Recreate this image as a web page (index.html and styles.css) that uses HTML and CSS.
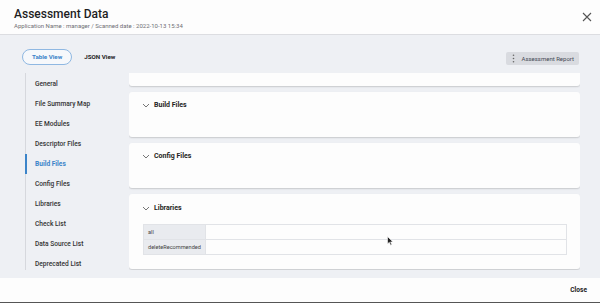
FILE: index.html
```html
<!DOCTYPE html>
<html lang="en">
<head>
  <meta charset="UTF-8">
  <meta name="viewport" content="width=device-width, initial-scale=1">
  <title>Assessment Data</title>
  <link rel="stylesheet" href="styles.css">
</head>
<body>
  <div class="modal">
    <header class="modal-header">
      <div>
        <h1>Assessment Data</h1>
        <p class="subtitle">Application Name : manager / Scanned date : 2022-10-13 15:34</p>
      </div>
      <button class="close-x" aria-label="Close">
        <svg width="10" height="10" viewBox="0 0 10 10"><path d="M1 1 L9 9 M9 1 L1 9" stroke="#555" stroke-width="1.1" fill="none"/></svg>
      </button>
    </header>

    <div class="modal-body">
      <div class="toolbar">
        <div class="tabs">
          <span class="tab active">Table View</span>
          <span class="tab">JSON View</span>
        </div>
        <button class="report-btn">
          <svg width="3" height="9" viewBox="0 0 3 9"><circle cx="1.5" cy="1.2" r="0.8" fill="#666"/><circle cx="1.5" cy="4.5" r="0.8" fill="#666"/><circle cx="1.5" cy="7.8" r="0.8" fill="#666"/></svg>
          Assessment Report
        </button>
      </div>

      <div class="main">
        <nav class="sidebar">
          <a class="nav-item">General</a>
          <a class="nav-item">File Summary Map</a>
          <a class="nav-item">EE Modules</a>
          <a class="nav-item">Descriptor Files</a>
          <a class="nav-item active">Build Files</a>
          <a class="nav-item">Config Files</a>
          <a class="nav-item">Libraries</a>
          <a class="nav-item">Check List</a>
          <a class="nav-item">Data Source List</a>
          <a class="nav-item">Deprecated List</a>
        </nav>

        <div class="content">
          <div class="card card-tail"></div>

          <div class="card">
            <div class="card-head">
              <svg class="chev" width="8" height="5" viewBox="0 0 8 5"><path d="M1 1 L4 4 L7 1" stroke="#666" stroke-width="0.9" fill="none"/></svg>
              <span>Build Files</span>
            </div>
          </div>

          <div class="card">
            <div class="card-head">
              <svg class="chev" width="8" height="5" viewBox="0 0 8 5"><path d="M1 1 L4 4 L7 1" stroke="#666" stroke-width="0.9" fill="none"/></svg>
              <span>Config Files</span>
            </div>
          </div>

          <div class="card card-lib">
            <div class="card-head">
              <svg class="chev" width="8" height="5" viewBox="0 0 8 5"><path d="M1 1 L4 4 L7 1" stroke="#666" stroke-width="0.9" fill="none"/></svg>
              <span>Libraries</span>
            </div>
            <table class="lib-table">
              <tr><th>all</th><td></td></tr>
              <tr><th>deleteRecommended</th><td></td></tr>
            </table>
            <svg class="cursor" width="7" height="10" viewBox="0 0 7 10"><path d="M0.5 0.5 L0.5 8 L2.3 6.3 L3.6 9.3 L4.8 8.8 L3.6 5.9 L6 5.9 Z" fill="#222" stroke="#fff" stroke-width="0.6"/></svg>
          </div>
        </div>
      </div>
    </div>

    <footer class="modal-footer">
      <button class="close-btn">Close</button>
    </footer>
  </div>
</body>
</html>
```

FILE: styles.css
```css
* {
  margin: 0;
  padding: 0;
  box-sizing: border-box;
}

body {
  font-family: Roboto, "Liberation Sans", sans-serif;
  background: #fff;
  width: 600px;
  height: 303px;
  overflow: hidden;
  color: #222;
}

button {
  font-family: inherit;
  border: none;
  background: none;
}

.modal {
  display: flex;
  flex-direction: column;
  height: 303px;
}

.modal-header {
  height: 35px;
  padding: 6px 8px 0 14px;
  display: flex;
  justify-content: space-between;
  align-items: flex-start;
  background: #fdfdfd;
  border-bottom: 1px solid #dcdde1;
}

.modal-header h1 {
  font-size: 12px;
  font-weight: 500;
  color: #1d1d1f;
  line-height: 16px;
}

.subtitle {
  font-size: 6px;
  color: #6f6f74;
  line-height: 8px;
}

.close-x {
  margin-top: 6px;
  width: 10px;
  height: 10px;
  display: flex;
}

.modal-body {
  flex: 1;
  background: #eef0f4;
  padding: 15px 20px 0 22px;
  overflow: hidden;
}

.toolbar {
  display: flex;
  justify-content: space-between;
  align-items: center;
  height: 14px;
}

.tabs {
  display: flex;
  align-items: center;
  gap: 12px;
}

.tab {
  font-size: 6.2px;
  font-weight: 700;
  color: #222;
}

.tab.active {
  color: #3b84c9;
  border: 1px solid #8fb8e2;
  border-radius: 8px;
  padding: 3px 9px;
  background: #f6f8fb;
}

.report-btn {
  height: 13px;
  margin-top: 2px;
  margin-right: 1px;
  padding: 0 5px 0 6px;
  background: #d9dbe0;
  border-radius: 2px;
  font-size: 6px;
  color: #454a55;
  display: flex;
  align-items: center;
  gap: 6px;
}

.main {
  display: flex;
  margin-top: 9px;
  margin-left: 3px;
  height: 200px;
  overflow: hidden;
}

.sidebar {
  width: 104px;
  height: 197px;
  border-left: 1px solid #d6d8dd;
  display: flex;
  flex-direction: column;
  flex-shrink: 0;
}

.nav-item {
  height: 20px;
  flex-shrink: 0;
  display: flex;
  align-items: center;
  padding-left: 9px;
  font-size: 6.6px;
  font-weight: 500;
  color: #333;
}

.nav-item:first-child {
  margin-top: 1px;
}

.nav-item.active {
  color: #3b84c9;
  font-weight: 700;
  border-left: 2px solid #3b84c9;
  margin-left: -1px;
  padding-left: 8px;
}

.content {
  flex: 1;
  display: flex;
  flex-direction: column;
  gap: 6px;
  height: 197px;
  overflow: hidden;
}

.card {
  background: #fdfdfd;
  border-radius: 3px;
  box-shadow: 0 1px 1.5px rgba(0, 0, 0, 0.16);
  height: 45px;
  flex-shrink: 0;
  position: relative;
}

.card-tail {
  height: 13px;
  border-radius: 0 0 3px 3px;
}

.card-lib {
  height: 75px;
}

.card-head {
  display: flex;
  align-items: center;
  gap: 4px;
  height: 26px;
  padding-left: 13px;
  font-size: 7px;
  font-weight: 700;
  color: #1f1f22;
}

.card-lib .card-head {
  height: 27px;
}

.chev {
  margin-top: 1px;
}

.lib-table {
  margin: 3px 13px 0 14px;
  width: calc(100% - 27px);
  border-collapse: collapse;
  font-size: 5.6px;
  color: #444;
}

.lib-table th,
.lib-table td {
  height: 15px;
  border: 1px solid #e1e3e7;
  text-align: left;
  font-weight: 400;
}

.lib-table th {
  width: 62px;
  background: #e9ebef;
  padding-left: 4px;
}

.lib-table td {
  background: #fdfdfd;
}

.cursor {
  position: absolute;
  left: 258px;
  top: 42px;
}

.modal-footer {
  height: 25px;
  background: #fdfdfd;
  display: flex;
  justify-content: flex-end;
  align-items: center;
  padding-right: 13px;
  border-bottom: 1px solid #555;
}

.close-btn {
  font-size: 6.6px;
  font-weight: 700;
  color: #222;
}
```
